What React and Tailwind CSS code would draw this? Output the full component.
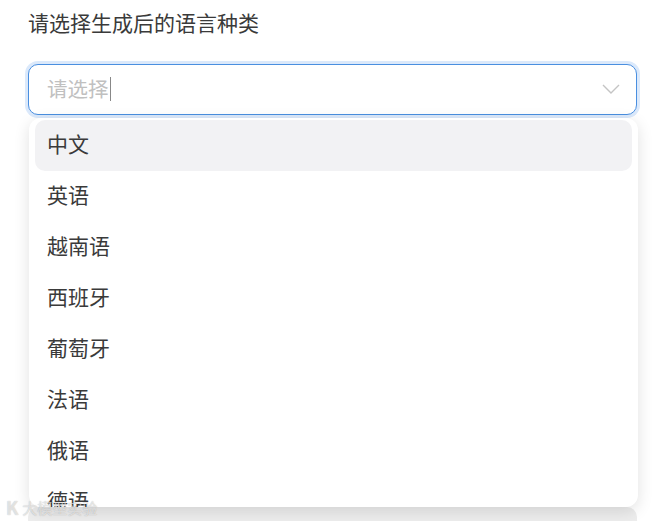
import React from "react";

const items = ["中文", "英语", "越南语", "西班牙", "葡萄牙", "法语", "俄语", "德语"];

export default function App() {
  return (
    <div
      className="relative w-[666px] h-[521px] overflow-hidden bg-white text-[#3a3a3a]"
      style={{ fontFamily: '"Noto Sans CJK SC", "Noto Sans", sans-serif' }}
    >
      <div className="flex flex-col pl-[28px] pr-[29px]">
        <div className="h-[44px] flex items-center text-[21px] leading-none">请选择生成后的语言种类</div>
        <div className="h-[20px]" />
        <div className="h-[51px] rounded-[10px] border border-[#4a8fe0] ring-[3px] ring-[#dbe9fb] bg-white flex items-center pl-[18px] pr-[16px] pb-[2px]">
          <span className="text-[20.5px] leading-none text-[#c0c0c0]">请选择</span>
          <span className="ml-[1px] w-[1px] h-[24px] bg-[#888]" />
          <div className="flex-1" />
          <svg width="18" height="10" viewBox="0 0 18 10" fill="none">
            <path d="M1 1 L9 9 L17 1" stroke="#c4c4c4" strokeWidth="1.4" />
          </svg>
        </div>
        <div className="h-[20px]" />
        <div className="h-[40px]" />
        <div className="mt-[332px] h-[60px] rounded-[10px] bg-[#ededed]" />
      </div>

      <div className="absolute left-[29px] top-[118px] w-[609px] h-[389px] bg-white rounded-[12px] shadow-[0_4px_16px_rgba(0,0,0,0.12)] overflow-hidden px-[6px] pt-[2px]">
        {items.map((t, i) => (
          <div
            key={t}
            className={`h-[51px] flex items-center pl-[12px] pb-[4px] rounded-[10px] text-[21px] leading-none text-[#3a3a3a] ${i === 0 ? "bg-[#f2f2f4]" : ""}`}
          >
            {t}
          </div>
        ))}
      </div>

      <div className="absolute left-[6px] bottom-[5px] flex items-center gap-[4px] leading-none text-white/60 [text-shadow:0_0_1px_rgba(0,0,0,0.3)]">
        <span className="text-[18px] font-bold">K</span>
        <span className="text-[15px]">大模型实验</span>
      </div>
    </div>
  );
}
